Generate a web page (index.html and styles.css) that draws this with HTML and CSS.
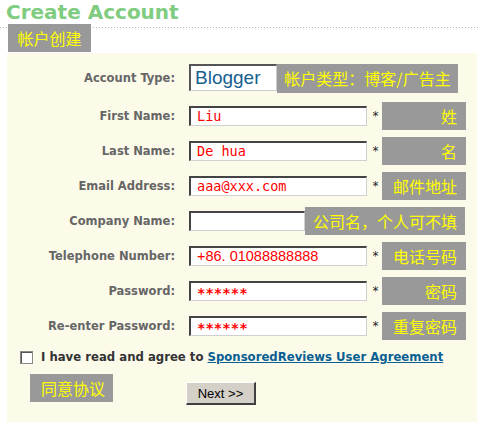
FILE: index.html
```html
<!DOCTYPE html>
<html lang="zh-CN">
<head>
  <meta charset="UTF-8" />
  <title>Create Account</title>
  <link rel="stylesheet" href="styles.css">
</head>
<body>
  <h1 class="page-title">Create Account</h1>
  <div class="dots"></div>
  <div class="tip tip-title">帐户创建</div>

  <form class="panel">
    <div class="row row-first">
      <label class="label">Account Type:</label>
      <div class="select-box">Blogger</div>
      <div class="tip tip-type">帐户类型：博客/广告主</div>
    </div>
    <div class="row">
      <label class="label">First Name:</label>
      <input class="field" type="text" value="Liu">
      <span class="req">*</span>
      <div class="tip tip-note">姓</div>
    </div>
    <div class="row">
      <label class="label">Last Name:</label>
      <input class="field" type="text" value="De hua">
      <span class="req">*</span>
      <div class="tip tip-note">名</div>
    </div>
    <div class="row">
      <label class="label">Email Address:</label>
      <input class="field" type="text" value="aaa@xxx.com">
      <span class="req">*</span>
      <div class="tip tip-note">邮件地址</div>
    </div>
    <div class="row">
      <label class="label">Company Name:</label>
      <input class="field field-short" type="text" value="">
      <div class="tip tip-wide">公司名，个人可不填</div>
    </div>
    <div class="row">
      <label class="label">Telephone Number:</label>
      <input class="field field-tel" type="text" value="+86. 01088888888">
      <span class="req">*</span>
      <div class="tip tip-note">电话号码</div>
    </div>
    <div class="row">
      <label class="label">Password:</label>
      <input class="field field-pass" type="text" value="******">
      <span class="req">*</span>
      <div class="tip tip-note">密码</div>
    </div>
    <div class="row">
      <label class="label">Re-enter Password:</label>
      <input class="field field-pass" type="text" value="******">
      <span class="req">*</span>
      <div class="tip tip-note">重复密码</div>
    </div>

    <div class="agree">
      <input class="check" type="checkbox">
      <span>I have read and agree to <a href="#">SponsoredReviews User Agreement</a></span>
    </div>
    <div class="actions">
      <div class="tip tip-agree">同意协议</div>
      <button class="next-btn" type="button">Next &gt;&gt;</button>
    </div>
  </form>
</body>
</html>
```

FILE: styles.css
```css
body {
  margin: 0;
  font-family: "DejaVu Sans", Verdana, sans-serif;
  background: #fff;
}

.page-title {
  margin: 0;
  padding-left: 6px;
  height: 27px;
  font-size: 20px;
  line-height: 25px;
  color: #80cc80;
}

.dots {
  height: 1px;
  background: repeating-linear-gradient(to right, #b4b4b4 0 1px, transparent 1px 3px);
}

.tip {
  background: #999;
  color: #ff0;
  font-family: "Noto Sans CJK SC", sans-serif;
  font-size: 16px;
  height: 28px;
  line-height: 28px;
  box-sizing: border-box;
}

.tip-title {
  width: 83px;
  margin: -4px 0 0 8px;
  text-align: center;
}

.panel {
  margin: 1px 0 0 7px;
  width: 470px;
  height: 370px;
  padding-top: 7px;
  box-sizing: border-box;
  background: #fcfbea;
}

.row {
  display: flex;
  align-items: center;
  height: 35px;
}

.row-first {
  margin-bottom: 3px;
}

.label {
  width: 168px;
  margin-right: 14px;
  text-align: right;
  font-size: 11.5px;
  font-weight: bold;
  color: #666;
}

.select-box {
  width: 88px;
  height: 27px;
  box-sizing: border-box;
  border-style: solid;
  border-width: 2px 1px 1px 2px;
  border-color: #555 #ccc #ccc #555;
  background: #fff;
  padding-left: 4px;
  font-family: "Liberation Sans", Arial, sans-serif;
  font-size: 19px;
  line-height: 23px;
  color: #16608f;
}

.tip-type {
  width: 181px;
  height: 29px;
  margin-top: 2px;
  text-align: center;
}

.field {
  width: 178px;
  height: 20px;
  margin: 0;
  padding: 0 0 0 6px;
  box-sizing: border-box;
  border-style: solid;
  border-width: 2px 1px 1px 2px;
  border-color: #444 #d0d0d0 #d0d0d0 #444;
  background: #fff;
  font-family: "DejaVu Sans Mono", monospace;
  font-size: 13.5px;
  color: #f00;
  outline: none;
}

.field-short {
  width: 116px;
}

.field-tel {
  font-family: "Liberation Sans", Arial, sans-serif;
  font-size: 14.5px;
}

.field-pass {
  font-weight: bold;
  font-size: 14px;
  padding-top: 3px;
}

.req {
  width: 15px;
  padding-left: 2px;
  box-sizing: border-box;
  text-align: center;
  font-size: 12px;
  color: #222;
}

.tip-note {
  width: 84px;
  padding-right: 9px;
  text-align: right;
}

.tip-wide {
  width: 160px;
  text-align: center;
}

.agree {
  display: flex;
  align-items: center;
  height: 24px;
  margin-top: 2px;
  padding-left: 13px;
  font-size: 11.7px;
  font-weight: bold;
  color: #333;
}

.check {
  appearance: none;
  width: 13px;
  height: 13px;
  margin: 0 8px 0 0;
  border: 1px solid #888;
  box-shadow: inset 1px 1px 0 #555;
  background: #fff;
}

.agree a {
  color: #0a5f92;
}

.actions {
  display: flex;
  align-items: flex-start;
  margin-top: 3px;
  padding-left: 23px;
}

.tip-agree {
  width: 83px;
  padding-left: 11px;
  margin-top: 2px;
}

.next-btn {
  width: 70px;
  height: 23px;
  margin: 10px 0 0 73px;
  padding: 0;
  border-style: solid;
  border-width: 1px 2px 2px 1px;
  border-color: #fff #404040 #404040 #fff;
  background: #d4d0c8;
  font-family: "Liberation Sans", Arial, sans-serif;
  font-size: 13px;
  color: #000;
}
```
